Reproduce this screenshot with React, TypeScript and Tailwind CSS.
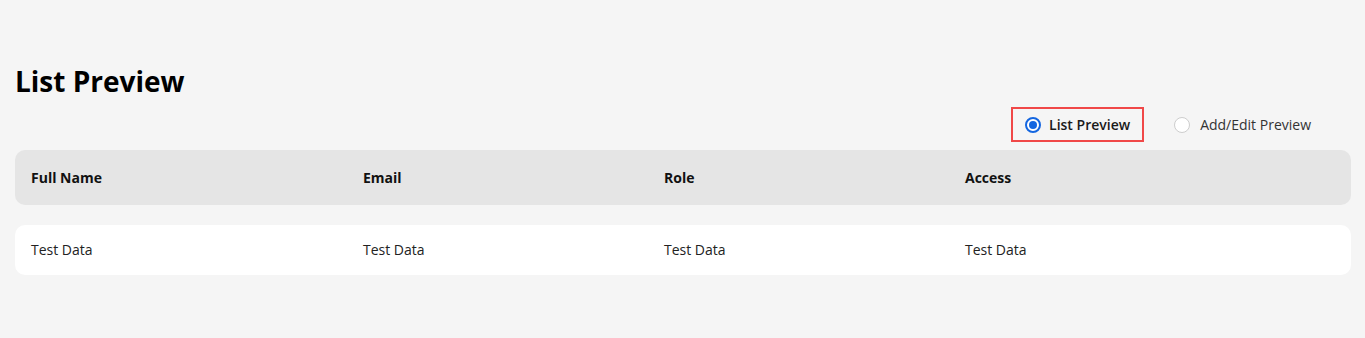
import { useState } from "react";

const columns = ["Full Name", "Email", "Role", "Access"];
const rows = [["Test Data", "Test Data", "Test Data", "Test Data"]];

function Radio({ checked }: { checked: boolean }) {
  return checked ? (
    <span className="flex h-[16px] w-[16px] items-center justify-center rounded-full border-2 border-[#1466e0] bg-white">
      <span className="h-[8px] w-[8px] rounded-full bg-[#1466e0]" />
    </span>
  ) : (
    <span className="h-[16px] w-[16px] rounded-full border border-[#cdcdcd] bg-white" />
  );
}

export default function App() {
  const [mode, setMode] = useState<"list" | "edit">("list");

  return (
    <div
      className="min-h-[338px] bg-[#f5f5f5] px-[15px] pt-[62px] text-[#1a1a1a]"
      style={{ fontFamily: '"Open Sans", "Noto Sans", sans-serif' }}
    >
      <h1 className="text-[28px] font-bold leading-[38px] text-black">List Preview</h1>

      {/* Preview toggle */}
      <div className="mt-[7px] flex items-center justify-end gap-[30px] pr-[39px]">
        <button
          type="button"
          onClick={() => setMode("list")}
          className={[
            "flex h-[35px] items-center gap-[8px] border-2 pl-[12px] pr-[12px]",
            mode === "list" ? "border-[#f04848]" : "border-transparent",
          ].join(" ")}
        >
          <Radio checked={mode === "list"} />
          <span className="text-[14px] font-semibold text-[#1a1a1a]">List Preview</span>
        </button>
        <button
          type="button"
          onClick={() => setMode("edit")}
          className="flex h-[35px] items-center gap-[10px]"
        >
          <Radio checked={mode === "edit"} />
          <span className="text-[14px] text-[#333]">Add/Edit Preview</span>
        </button>
      </div>

      {/* Table */}
      <div className="mt-[8px] w-[1336px]">
        <div className="grid h-[55px] grid-cols-[332px_301px_301px_1fr] items-center rounded-[10px] bg-[#e5e5e5] px-4">
          {columns.map((c) => (
            <div key={c} className="text-[14px] font-bold text-[#111]">
              {c}
            </div>
          ))}
        </div>
        {rows.map((r, i) => (
          <div
            key={i}
            className="mt-5 grid h-[50px] grid-cols-[332px_301px_301px_1fr] items-center rounded-[10px] bg-white px-4 pb-[2px]"
          >
            {r.map((v, j) => (
              <div key={j} className="text-[14px] text-[#222]">
                {v}
              </div>
            ))}
          </div>
        ))}
      </div>
    </div>
  );
}
